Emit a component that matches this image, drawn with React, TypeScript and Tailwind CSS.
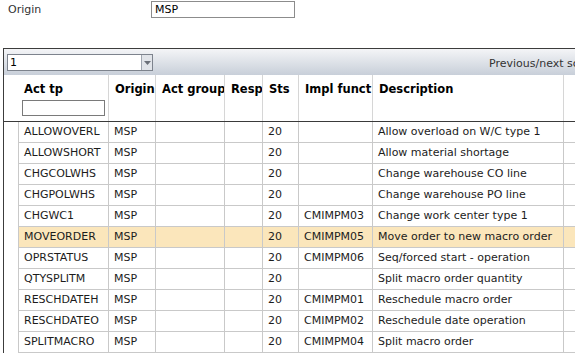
import React from "react";

interface ActRow {
  tp: string;
  sts: string;
  impl: string;
  desc: string;
  selected?: boolean;
}

const rows: ActRow[] = [
  { tp: "ALLOWOVERL", sts: "20", impl: "", desc: "Allow overload on W/C type 1" },
  { tp: "ALLOWSHORT", sts: "20", impl: "", desc: "Allow material shortage" },
  { tp: "CHGCOLWHS", sts: "20", impl: "", desc: "Change warehouse CO line" },
  { tp: "CHGPOLWHS", sts: "20", impl: "", desc: "Change warehouse PO line" },
  { tp: "CHGWC1", sts: "20", impl: "CMIMPM03", desc: "Change work center type 1" },
  { tp: "MOVEORDER", sts: "20", impl: "CMIMPM05", desc: "Move order to new macro order", selected: true },
  { tp: "OPRSTATUS", sts: "20", impl: "CMIMPM06", desc: "Seq/forced start - operation" },
  { tp: "QTYSPLITM", sts: "20", impl: "", desc: "Split macro order quantity" },
  { tp: "RESCHDATEH", sts: "20", impl: "CMIMPM01", desc: "Reschedule macro order" },
  { tp: "RESCHDATEO", sts: "20", impl: "CMIMPM02", desc: "Reschedule date operation" },
  { tp: "SPLITMACRO", sts: "20", impl: "CMIMPM04", desc: "Split macro order" },
];

const cols = "grid grid-cols-[14px_91px_47px_69px_38px_36px_74px_191px_120px]";

function HeaderCell({ label, children }: { label: string; children?: React.ReactNode }) {
  return (
    <div className="border-r border-[#d6d6d6] pl-[6px] pt-[6px] font-bold text-[11.5px] text-black whitespace-nowrap overflow-hidden">
      {label}
      {children}
    </div>
  );
}

export default function App() {
  return (
    <div
      className="w-[575px] h-[362px] overflow-hidden bg-white text-[11px] text-[#1c1c1c]"
      style={{ fontFamily: '"DejaVu Sans", Verdana, sans-serif' }}
    >
      <div className="h-[48px] flex items-start pt-[1px]">
        <span className="w-[151px] pl-[8px] pt-[1px] text-[#333]">Origin</span>
        <div className="w-[144px] h-[17px] border border-[#8c8c8c] pl-[3px] leading-[15px] text-black">MSP</div>
      </div>

      <div className="ml-[3px] w-[700px] border-l border-t border-[#3c3c3c]">
        <div className="h-[26px] flex items-start pt-[5px] bg-gradient-to-b from-[#f4f5f7] to-[#c8cfd9]">
          <div className="ml-[3px] w-[146px] h-[17px] flex border border-[#7d838d] bg-white">
            <span className="flex-1 pl-[2px] leading-[15px] text-black">1</span>
            <span className="w-[11px] border-l border-[#a0a6b0] bg-[#e1e4e9] flex items-center justify-center">
              <svg width="7" height="4" viewBox="0 0 7 4">
                <path d="M0 0h7L3.5 4z" fill="#6b7079" />
              </svg>
            </span>
          </div>
          <span className="ml-[336px] pt-[2px] text-[#333] whitespace-nowrap">Previous/next screen</span>
        </div>

        <div className={`${cols} h-[47px] border-b border-[#3a3a3a]`}>
          <div />
          <div className="pl-[6px] pt-[6px] border-r border-[#d6d6d6] font-bold text-[11.5px] text-black">
            Act tp
            <div className="mt-[2px] ml-[-2px] w-[83px] h-[16px] border border-[#7a7a7a] bg-white" />
          </div>
          <HeaderCell label="Origin" />
          <HeaderCell label="Act group" />
          <HeaderCell label="Resp" />
          <HeaderCell label="Sts" />
          <HeaderCell label="Impl funct" />
          <HeaderCell label="Description" />
          <div />
        </div>

        {rows.map((r) => {
          const cell = `h-[21px] border-r border-b border-[#c9c9c9] pl-[5px] leading-[20px] whitespace-nowrap overflow-hidden ${
            r.selected ? "bg-[#fbe6bb]" : ""
          }`;
          return (
            <div key={r.tp} className={cols}>
              <div />
              <div className={`${cell} border-l`}>{r.tp}</div>
              <div className={cell}>MSP</div>
              <div className={cell} />
              <div className={cell} />
              <div className={cell}>{r.sts}</div>
              <div className={cell}>{r.impl}</div>
              <div className={cell}>{r.desc}</div>
              <div className={cell} />
            </div>
          );
        })}
      </div>
    </div>
  );
}
